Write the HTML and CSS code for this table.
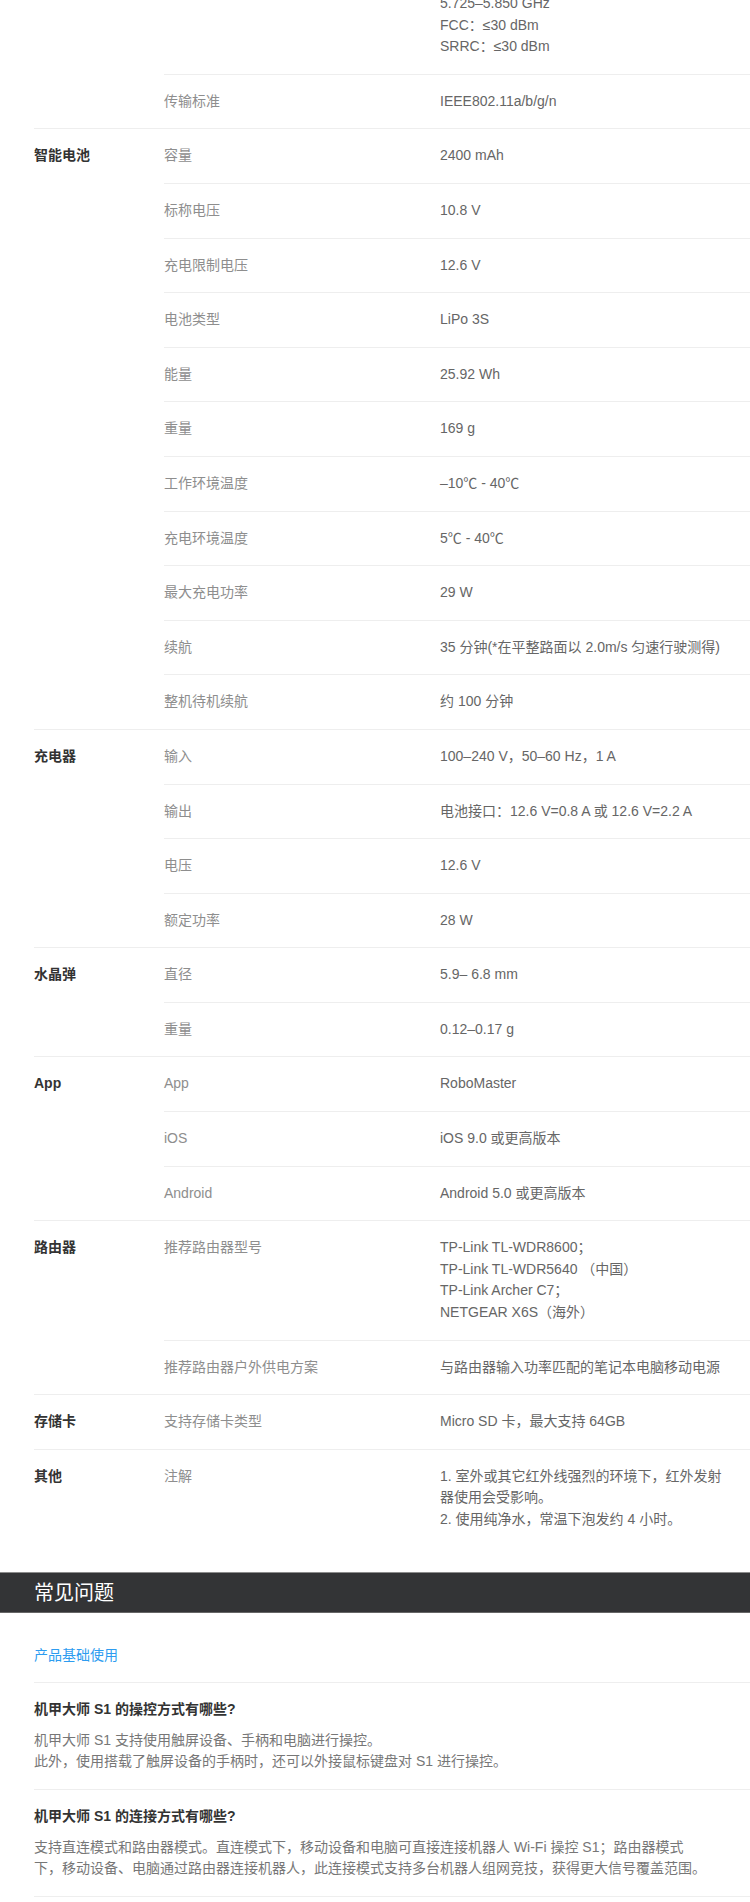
FILE: index.html
```html
<!DOCTYPE html>
<html lang="zh-CN">
<head>
    <meta charset="UTF-8">
    <title>机甲大师 S1 规格参数</title>
    <link rel="stylesheet" href="styles.css">
</head>
<body>

    <!-- 规格参数 -->
    <div class="specs">
        <div class="group">
            <div class="group-name"></div>
            <div class="items">
                <div class="item">
                    <div class="key"></div>
                    <div class="val">5.725–5.850 GHz<br>FCC：≤30 dBm<br>SRRC：≤30 dBm</div>
                </div>
                <div class="item">
                    <div class="key">传输标准</div>
                    <div class="val">IEEE802.11a/b/g/n</div>
                </div>
            </div>
        </div>

        <div class="group">
            <div class="group-name">智能电池</div>
            <div class="items">
                <div class="item"><div class="key">容量</div><div class="val">2400 mAh</div></div>
                <div class="item"><div class="key">标称电压</div><div class="val">10.8 V</div></div>
                <div class="item"><div class="key">充电限制电压</div><div class="val">12.6 V</div></div>
                <div class="item"><div class="key">电池类型</div><div class="val">LiPo 3S</div></div>
                <div class="item"><div class="key">能量</div><div class="val">25.92 Wh</div></div>
                <div class="item"><div class="key">重量</div><div class="val">169 g</div></div>
                <div class="item"><div class="key">工作环境温度</div><div class="val">–10℃ - 40℃</div></div>
                <div class="item"><div class="key">充电环境温度</div><div class="val">5℃ - 40℃</div></div>
                <div class="item"><div class="key">最大充电功率</div><div class="val">29 W</div></div>
                <div class="item"><div class="key">续航</div><div class="val">35 分钟(*在平整路面以 2.0m/s 匀速行驶测得)</div></div>
                <div class="item"><div class="key">整机待机续航</div><div class="val">约 100 分钟</div></div>
            </div>
        </div>

        <div class="group">
            <div class="group-name">充电器</div>
            <div class="items">
                <div class="item"><div class="key">输入</div><div class="val">100–240 V，50–60 Hz，1 A</div></div>
                <div class="item"><div class="key">输出</div><div class="val">电池接口：12.6 V=0.8 A 或 12.6 V=2.2 A</div></div>
                <div class="item"><div class="key">电压</div><div class="val">12.6 V</div></div>
                <div class="item"><div class="key">额定功率</div><div class="val">28 W</div></div>
            </div>
        </div>

        <div class="group">
            <div class="group-name">水晶弹</div>
            <div class="items">
                <div class="item"><div class="key">直径</div><div class="val">5.9– 6.8 mm</div></div>
                <div class="item"><div class="key">重量</div><div class="val">0.12–0.17 g</div></div>
            </div>
        </div>

        <div class="group">
            <div class="group-name">App</div>
            <div class="items">
                <div class="item"><div class="key">App</div><div class="val">RoboMaster</div></div>
                <div class="item"><div class="key">iOS</div><div class="val">iOS 9.0 或更高版本</div></div>
                <div class="item"><div class="key">Android</div><div class="val">Android 5.0 或更高版本</div></div>
            </div>
        </div>

        <div class="group">
            <div class="group-name">路由器</div>
            <div class="items">
                <div class="item">
                    <div class="key">推荐路由器型号</div>
                    <div class="val">TP-Link TL-WDR8600；<br>TP-Link TL-WDR5640 （中国）<br>TP-Link Archer C7；<br>NETGEAR X6S（海外）</div>
                </div>
                <div class="item"><div class="key">推荐路由器户外供电方案</div><div class="val">与路由器输入功率匹配的笔记本电脑移动电源</div></div>
            </div>
        </div>

        <div class="group">
            <div class="group-name">存储卡</div>
            <div class="items">
                <div class="item"><div class="key">支持存储卡类型</div><div class="val">Micro SD 卡，最大支持 64GB</div></div>
            </div>
        </div>

        <div class="group">
            <div class="group-name">其他</div>
            <div class="items">
                <div class="item">
                    <div class="key">注解</div>
                    <div class="val">1. 室外或其它红外线强烈的环境下，红外发射器使用会受影响。<br>2. 使用纯净水，常温下泡发约 4 小时。</div>
                </div>
            </div>
        </div>
    </div>

    <!-- 常见问题 -->
    <div class="faq-head">常见问题</div>

    <div class="faq">
        <div class="faq-cat">产品基础使用</div>

        <div class="faq-item">
            <div class="faq-q">机甲大师 S1 的操控方式有哪些?</div>
            <div class="faq-a">机甲大师 S1 支持使用触屏设备、手柄和电脑进行操控。<br>此外，使用搭载了触屏设备的手柄时，还可以外接鼠标键盘对 S1 进行操控。</div>
        </div>

        <div class="faq-item">
            <div class="faq-q">机甲大师 S1 的连接方式有哪些?</div>
            <div class="faq-a">支持直连模式和路由器模式。直连模式下，移动设备和电脑可直接连接机器人 Wi-Fi 操控 S1；路由器模式下，移动设备、电脑通过路由器连接机器人，此连接模式支持多台机器人组网竞技，获得更大信号覆盖范围。</div>
        </div>
    </div>

</body>
</html>
```

FILE: styles.css
```css
body {
    margin: 0;
    font-family: "Liberation Sans", "Noto Sans CJK SC", sans-serif;
    font-size: 14px;
    line-height: 21.6px;
    color: #666;
    background: #fff;
}

/* 规格表 */
.specs {
    margin: -23px 0 0 34px;
    padding-bottom: 25px;
}
.group {
    display: flex;
    border-bottom: 1px solid #eee;
}
.group:last-child {
    border-bottom: none;
}
.group-name {
    width: 130px;
    flex-shrink: 0;
    padding-top: 16px;
    font-weight: bold;
    color: #333;
}
.items {
    flex: 1;
}
.item {
    display: flex;
    padding: 16px 0;
    border-bottom: 1px solid #eee;
}
.item:last-child {
    border-bottom: none;
}
.key {
    width: 276px;
    flex-shrink: 0;
    color: #8e8e8e;
}
.val {
    width: 290px;
    color: #666;
}

/* 常见问题 */
.faq-head {
    height: 39px;
    padding-left: 34px;
    background: #333436;
    border-top: 1px solid #8c8c8c;
    border-bottom: 1px solid #666;
    color: #fff;
    font-size: 20px;
    line-height: 40px;
}
.faq {
    margin-left: 34px;
    padding-top: 32px;
}
.faq-cat {
    color: #2d9cf0;
    padding-bottom: 16px;
    border-bottom: 1px solid #eee;
}
.faq-item {
    padding: 16px 44px 16px 0;
    border-bottom: 1px solid #eee;
}
.faq-q {
    font-weight: bold;
    color: #333;
}
.faq-a {
    margin-top: 9px;
    color: #777;
}
```
